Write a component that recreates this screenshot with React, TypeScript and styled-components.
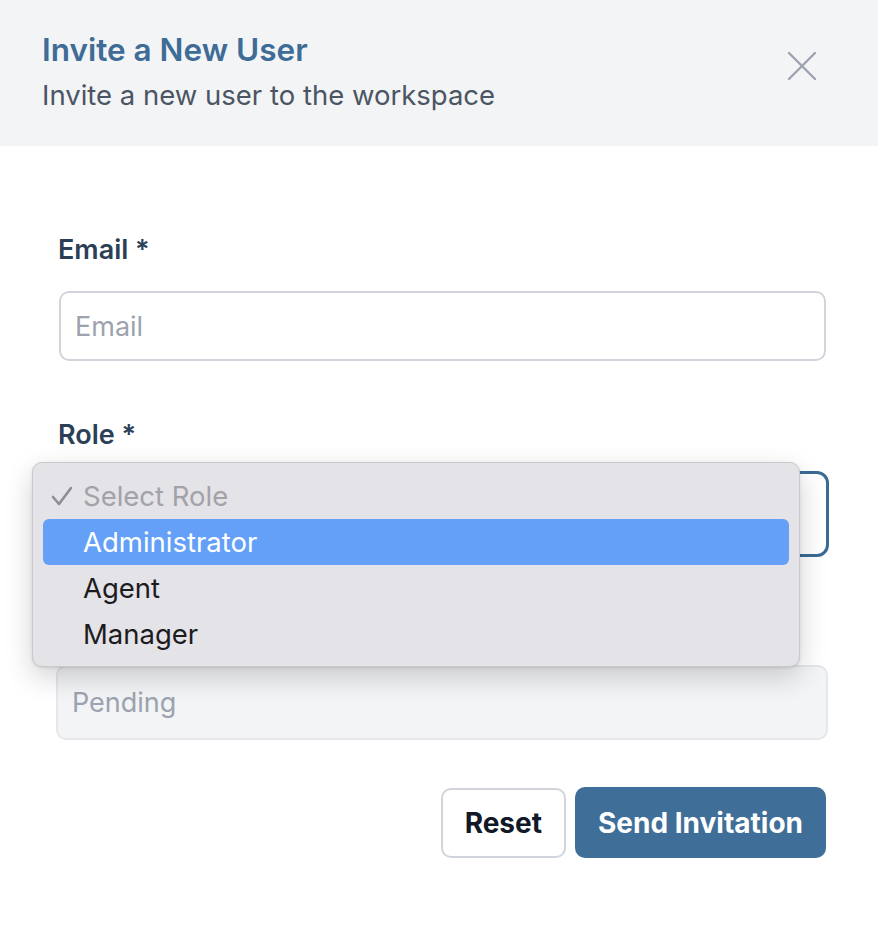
import React from 'react';
import styled, { createGlobalStyle } from 'styled-components';

const GlobalStyle = createGlobalStyle`
	html, body {
		margin: 0;
		background: #ffffff;
		font-family: Inter, 'Noto Sans', sans-serif;
	}
	* { box-sizing: border-box; }
`;

const roles = ['Administrator', 'Agent', 'Manager'];

export default function App() {
	return (
		<>
			<GlobalStyle />
			<Modal>
				<Header>
					<HeaderText>
						<Title>Invite a New User</Title>
						<Subtitle>Invite a new user to the workspace</Subtitle>
					</HeaderText>
					<CloseButton aria-label='Close'>
						<svg width='30' height='30' viewBox='0 0 30 30' fill='none'>
							<path d='M2 2L28 28M28 2L2 28' stroke='#9ca3af' strokeWidth='2.4' strokeLinecap='round' />
						</svg>
					</CloseButton>
				</Header>
				<Form>
					<Field $mb={59}>
						<Label>Email *</Label>
						<Input placeholder='Email' />
					</Field>
					<Field $gap={21} $mb={52}>
						<Label>Role *</Label>
						<SelectWrap>
							<SelectBox />
							<Menu>
								<MenuItem $muted>
									<Check width='22' height='20' viewBox='0 0 22 20' fill='none'>
										<path d='M2 11L8 18L20 2' stroke='#8e8d93' strokeWidth='2.6' strokeLinecap='round' strokeLinejoin='round' />
									</Check>
									Select Role
								</MenuItem>
								{roles.map((r, i) => (
									<MenuItem key={r} $active={i === 0}>
										{r}
									</MenuItem>
								))}
							</Menu>
						</SelectWrap>
					</Field>
					<Field $mb={47}>
						<Label>Status</Label>
						<Input $disabled value='Pending' readOnly />
					</Field>
					<Actions>
						<ResetButton>Reset</ResetButton>
						<PrimaryButton>Send Invitation</PrimaryButton>
					</Actions>
				</Form>
			</Modal>
		</>
	);
}

// Styled Components ...
const Modal = styled.div`
	width: 878px;
	min-height: 944px;
	background: #ffffff;
`;
const Header = styled.header`
	height: 146px;
	background: #f3f4f6;
	display: flex;
	justify-content: space-between;
	align-items: flex-start;
	padding: 31px 61px 0 42px;
`;
const HeaderText = styled.div`
	display: flex;
	flex-direction: column;
`;
const Title = styled.h1`
	margin: 0;
	font-size: 31.5px;
	line-height: 38px;
	font-weight: 600;
	color: #3e6c97;
`;
const Subtitle = styled.p`
	margin: 10px 0 0;
	font-size: 27.5px;
	line-height: 32px;
	font-weight: 400;
	color: #4b5563;
`;
const CloseButton = styled.button`
	border: 0;
	background: transparent;
	padding: 0;
	margin-top: 20px;
	width: 30px;
	height: 30px;
	display: flex;
	cursor: pointer;
`;
const Form = styled.div`
	display: flex;
	flex-direction: column;
	padding: 89px 52px 0 58px;
`;
const Field = styled.div<{ $gap?: number; $mb: number }>`
	display: flex;
	flex-direction: column;
	gap: ${(p) => p.$gap ?? 26}px;
	margin-bottom: ${(p) => p.$mb}px;
`;
const Label = styled.label`
	font-size: 27px;
	line-height: 30px;
	font-weight: 600;
	color: #2b3f57;
`;
const Input = styled.input<{ $disabled?: boolean }>`
	height: ${(p) => (p.$disabled ? 75 : 70)}px;
	margin: ${(p) => (p.$disabled ? '0 -2px 0 -2px' : '0 0 0 1px')};
	border: 2px solid ${(p) => (p.$disabled ? '#e5e7eb' : '#d1d5db')};
	border-radius: 10px;
	background: ${(p) => (p.$disabled ? '#f3f4f6' : '#ffffff')};
	padding: 0 14px;
	font-family: inherit;
	font-size: 27px;
	color: ${(p) => (p.$disabled ? '#9ca3af' : '#111827')};
	outline: none;
	&::placeholder {
		color: #9ca3af;
	}
`;
const SelectWrap = styled.div`
	position: relative;
`;
const SelectBox = styled.div`
	height: 86px;
	margin: 0 -3px 0 -1px;
	border: 3px solid #3c6a95;
	border-radius: 12px;
	background: #ffffff;
`;
const Menu = styled.div`
	position: absolute;
	top: -9px;
	left: -26px;
	width: 768px;
	padding: 10px 10px 9px;
	background: #e4e3e8;
	border: 1px solid #c9c8cd;
	border-radius: 10px;
	box-shadow: 0 10px 28px rgba(0, 0, 0, 0.18), 0 1px 3px rgba(0, 0, 0, 0.1);
	display: flex;
	flex-direction: column;
`;
const MenuItem = styled.div<{ $active?: boolean; $muted?: boolean }>`
	position: relative;
	height: 46px;
	display: flex;
	align-items: center;
	padding-left: 40px;
	border-radius: 6px;
	font-size: 27.5px;
	color: ${(p) => (p.$active ? '#ffffff' : p.$muted ? '#a3a2a8' : '#1c1c1e')};
	background: ${(p) => (p.$active ? '#64a0f8' : 'transparent')};
`;
const Check = styled.svg`
	position: absolute;
	left: 8px;
	top: 13px;
`;
const Actions = styled.div`
	display: flex;
	justify-content: flex-end;
	gap: 9px;
`;
const ResetButton = styled.button`
	height: 70px;
	margin-top: 1px;
	padding: 0 22px;
	background: #ffffff;
	border: 2px solid #d1d5db;
	border-radius: 10px;
	font-family: inherit;
	font-size: 28px;
	font-weight: 700;
	color: #111827;
`;
const PrimaryButton = styled.button`
	height: 71px;
	padding: 0 23px;
	background: #3f6e98;
	border: 0;
	border-radius: 10px;
	font-family: inherit;
	font-size: 28px;
	font-weight: 700;
	color: #ffffff;
`;
